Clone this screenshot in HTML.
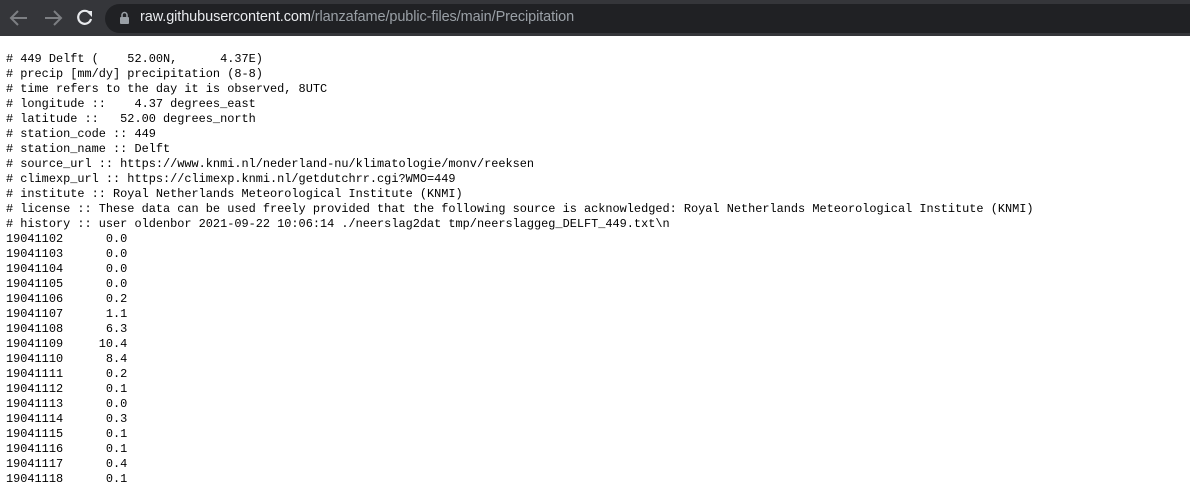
<!DOCTYPE html>
<html><head><style>
body{margin:0;width:1190px;height:480px;overflow:hidden;background:#fff}
.bar{height:36px;background:#35363a;position:relative}
.pill{position:absolute;left:105px;top:4px;width:1100px;height:29px;border-radius:15px;background:#202124}
.url{position:absolute;left:140px;top:9px;font:14.5px "Liberation Sans",sans-serif;color:#e8eaed;letter-spacing:-0.1px}
.url span{color:#9aa0a6}
pre{margin:0;position:absolute;left:6px;top:52px;font:11.9px/15px "Liberation Mono",monospace;color:#000}
</style></head><body>
<div class="bar">
<svg width="100" height="36" style="position:absolute;left:0;top:0">
<g stroke="#7d7f83" stroke-width="2" fill="none"><path d="M27 18H12M18 11l-7 7 7 7"/><path d="M45 18h15M54 11l7 7-7 7"/></g>
<path d="M90 13.5A6.5 6.5 0 1 0 91 19" stroke="#e8eaed" stroke-width="2.2" fill="none"/><path d="M86 11h6v6z" fill="#e8eaed"/>
</svg>
<div class="pill"></div>
<svg width="14" height="16" style="position:absolute;left:118px;top:11px"><rect x="2" y="6" width="9" height="7" rx="1" fill="#9aa0a6"/><path d="M4 6V4a2.5 2.5 0 0 1 5 0v2" stroke="#9aa0a6" stroke-width="1.5" fill="none"/></svg>
<div class="url">raw.githubusercontent.com<span>/rlanzafame/public-files/main/Precipitation</span></div>
</div>
<pre># 449 Delft (    52.00N,      4.37E)
# precip [mm/dy] precipitation (8-8)
# time refers to the day it is observed, 8UTC
# longitude ::    4.37 degrees_east
# latitude ::   52.00 degrees_north
# station_code :: 449
# station_name :: Delft
# source_url :: https://www.knmi.nl/nederland-nu/klimatologie/monv/reeksen
# climexp_url :: https://climexp.knmi.nl/getdutchrr.cgi?WMO=449
# institute :: Royal Netherlands Meteorological Institute (KNMI)
# license :: These data can be used freely provided that the following source is acknowledged: Royal Netherlands Meteorological Institute (KNMI)
# history :: user oldenbor 2021-09-22 10:06:14 ./neerslag2dat tmp/neerslaggeg_DELFT_449.txt\n
19041102      0.0
19041103      0.0
19041104      0.0
19041105      0.0
19041106      0.2
19041107      1.1
19041108      6.3
19041109     10.4
19041110      8.4
19041111      0.2
19041112      0.1
19041113      0.0
19041114      0.3
19041115      0.1
19041116      0.1
19041117      0.4
19041118      0.1</pre>
</body></html>
